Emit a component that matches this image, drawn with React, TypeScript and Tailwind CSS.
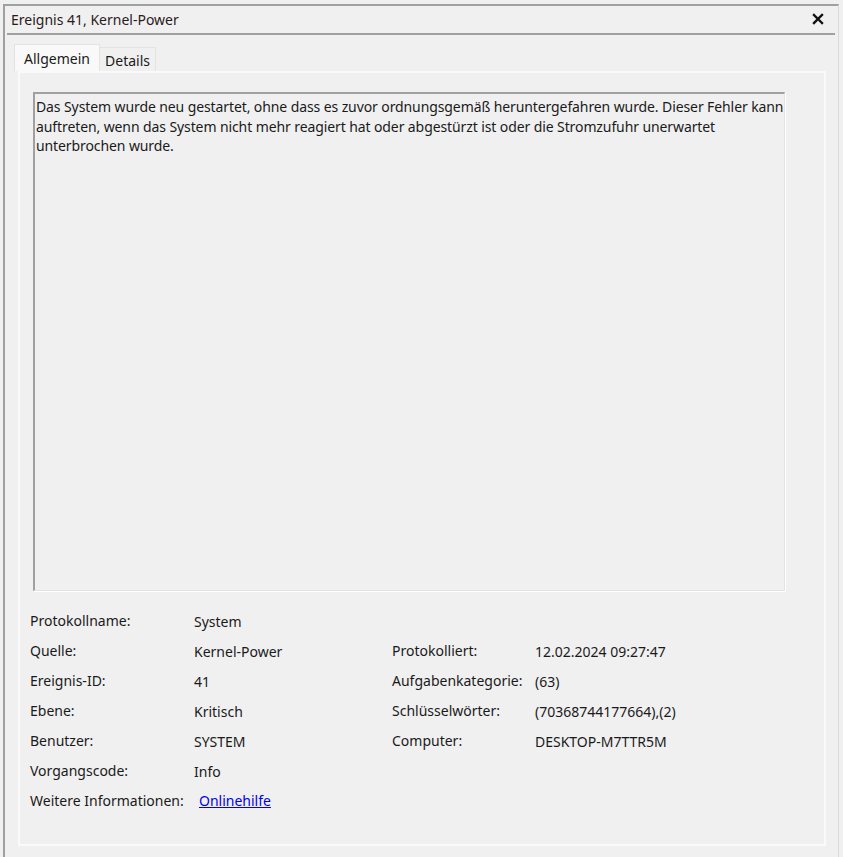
const rows: [string, string, string?, string?][] = [
  ["Protokollname:", "System"],
  ["Quelle:", "Kernel-Power", "Protokolliert:", "12.02.2024 09:27:47"],
  ["Ereignis-ID:", "41", "Aufgabenkategorie:", "(63)"],
  ["Ebene:", "Kritisch", "Schlüsselwörter:", "(70368744177664),(2)"],
  ["Benutzer:", "SYSTEM", "Computer:", "DESKTOP-M7TTR5M"],
  ["Vorgangscode:", "Info"],
];

export default function App() {
  return (
    <div
      className="w-[843px] h-[857px] bg-[#f0f0f0] pt-[4px] pl-[3px] text-[14px] text-[#1a1a1a] overflow-hidden"
      style={{ fontFamily: '"Noto Sans", "Open Sans", sans-serif' }}
    >
      <div className="h-full w-[836px] border-t-2 border-l-2 border-[#a0a0a0] border-r border-r-[#dadada] flex flex-col">
        {/* title bar */}
        <div className="h-[27px] flex items-center justify-between pl-[6px] pr-[14px] text-[#2b1a20]">
          <span className="leading-none">Ereignis 41, Kernel-Power</span>
          <svg width="12" height="12" viewBox="0 0 12 12" className="mt-[-1px]">
            <path d="M2 2 L10 10 M10 2 L2 10" stroke="#111" strokeWidth="2.4" strokeLinecap="square" />
          </svg>
        </div>
        <div className="mx-[2px] mr-[3px] h-[2px] bg-[#a0a0a0]" />

        {/* tabs */}
        <div className="pl-[9px] mt-[9px] flex items-end h-[27px]">
          <div className="h-[27px] w-[86px] bg-[#f9f9f9] border border-b-0 border-[#e3e3e3] flex items-center justify-center">
            Allgemein
          </div>
          <div className="h-[24px] w-[56px] border border-b-0 border-l-0 border-[#e3e3e3] flex items-center justify-center pt-[2px]">
            Details
          </div>
        </div>

        {/* panel */}
        <div className="ml-[13px] w-[808px] h-[775px] border-2 border-[#fafafa] bg-[#f0f0f0] pl-[13px] pt-[19px]">
          <div className="w-[752px] h-[499px] border-t-2 border-l-2 border-[#a0a0a0] border-r border-b border-r-[#e3e3e3] border-b-[#e3e3e3] shadow-[1px_1px_0_#ffffff] px-[1px] pt-[3px] leading-[19.5px] tracking-[-0.1px] whitespace-nowrap overflow-hidden">
            Das System wurde neu gestartet, ohne dass es zuvor ordnungsgemäß heruntergefahren wurde. Dieser Fehler kann
            <br />
            auftreten, wenn das System nicht mehr reagiert hat oder abgestürzt ist oder die Stromzufuhr unerwartet
            <br />
            unterbrochen wurde.
          </div>

          <div className="mt-[16px] ml-[-3px] grid grid-cols-[164px_198px_143px_1fr] auto-rows-[30px] items-center">
            {rows.map(([a, b, c, d]) => (
              <div key={a} className="contents">
                <span className="-mt-[3px]">{a}</span>
                <span className="-mt-[1px]">{b}</span>
                <span className="-mt-[3px]">{c ?? ""}</span>
                <span className="-mt-[1px]">{d ?? ""}</span>
              </div>
            ))}
            <span className="-mt-[3px]">Weitere Informationen:</span>
            <a href="#" className="text-[#0000ee] underline ml-[5px] -mt-[3px]">
              Onlinehilfe
            </a>
          </div>
        </div>
      </div>
    </div>
  );
}
